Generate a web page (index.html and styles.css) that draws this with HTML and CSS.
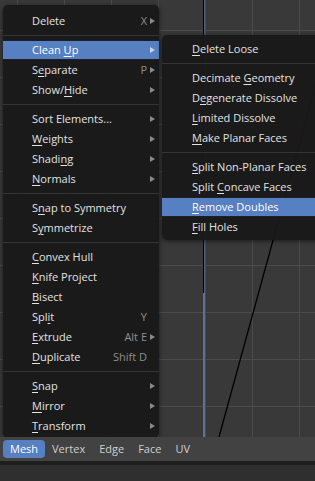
FILE: index.html
```html
<!DOCTYPE html>
<html lang="en">
<head>
    <meta charset="UTF-8">
    <meta name="viewport" content="width=device-width, initial-scale=1.0">
    <title>Mesh menu</title>
    <link rel="stylesheet" href="styles.css">
</head>
<body>
    <div class="screen">
        <div class="viewport">
            <!-- axis lines drawn on the 3d view -->
            <svg class="axes" width="315" height="437" viewBox="0 0 315 437">
                <line x1="203.5" y1="0" x2="203.5" y2="293" stroke="#050608" stroke-width="1"/>
                <line x1="204.5" y1="0" x2="204.5" y2="293" stroke="#4d5e78" stroke-width="1"/>
                <line x1="204" y1="293" x2="204" y2="437" stroke="#5d7392" stroke-width="2"/>
                <line x1="339" y1="0" x2="219" y2="437" stroke="#000" stroke-width="1.3"/>
            </svg>

            <div class="menu mainMenu">
                <div class="item"><span class="label">Delete</span><span class="key">X</span><span class="more arrow"></span></div>
                <div class="sep"></div>
                <div class="item active"><span class="label">Clean <u>U</u>p</span><span class="more arrow"></span></div>
                <div class="item"><span class="label">S<u>e</u>parate</span><span class="key">P</span><span class="more arrow"></span></div>
                <div class="item"><span class="label">Show/<u>H</u>ide</span><span class="more arrow"></span></div>
                <div class="sep"></div>
                <div class="item"><span class="label">Sort Elements...</span><span class="more arrow"></span></div>
                <div class="item"><span class="label"><u>W</u>eights</span><span class="more arrow"></span></div>
                <div class="item"><span class="label">Shadi<u>n</u>g</span><span class="more arrow"></span></div>
                <div class="item"><span class="label"><u>N</u>ormals</span><span class="more arrow"></span></div>
                <div class="sep"></div>
                <div class="item"><span class="label">S<u>n</u>ap to Symmetry</span><span class="more"></span></div>
                <div class="item"><span class="label">S<u>y</u>mmetrize</span><span class="more"></span></div>
                <div class="sep"></div>
                <div class="item"><span class="label"><u>C</u>onvex Hull</span><span class="more"></span></div>
                <div class="item"><span class="label"><u>K</u>nife Project</span><span class="more"></span></div>
                <div class="item"><span class="label"><u>B</u>isect</span><span class="more"></span></div>
                <div class="item"><span class="label">Spl<u>i</u>t</span><span class="key">Y</span><span class="more"></span></div>
                <div class="item"><span class="label"><u>E</u>xtrude</span><span class="key">Alt E</span><span class="more arrow"></span></div>
                <div class="item"><span class="label"><u>D</u>uplicate</span><span class="key">Shift D</span><span class="more"></span></div>
                <div class="sep"></div>
                <div class="item"><span class="label"><u>S</u>nap</span><span class="more arrow"></span></div>
                <div class="item"><span class="label"><u>M</u>irror</span><span class="more arrow"></span></div>
                <div class="item"><span class="label"><u>T</u>ransform</span><span class="more arrow"></span></div>
            </div>

            <div class="menu subMenu">
                <div class="item"><span class="label"><u>D</u>elete Loose</span></div>
                <div class="sep"></div>
                <div class="item"><span class="label">Decimate <u>G</u>eometry</span></div>
                <div class="item"><span class="label">D<u>e</u>generate Dissolve</span></div>
                <div class="item"><span class="label"><u>L</u>imited Dissolve</span></div>
                <div class="item"><span class="label"><u>M</u>ake Planar Faces</span></div>
                <div class="sep"></div>
                <div class="item"><span class="label"><u>S</u>plit Non-Planar Faces</span></div>
                <div class="item"><span class="label">Split <u>C</u>oncave Faces</span></div>
                <div class="item active"><span class="label"><u>R</u>emove Doubles</span></div>
                <div class="item"><span class="label"><u>F</u>ill Holes</span></div>
            </div>
        </div>

        <div class="header">
            <span class="tab selected">Mesh</span>
            <span class="tab">Vertex</span>
            <span class="tab">Edge</span>
            <span class="tab">Face</span>
            <span class="tab">UV</span>
        </div>
        <div class="bottom"></div>
    </div>
</body>
</html>
```

FILE: styles.css
```css
* {
    box-sizing: border-box;
    margin: 0;
    padding: 0;
}

body {
    width: 315px;
    height: 481px;
    overflow: hidden;
    background-color: #2f2f2f;
    font-family: "Open Sans", "DejaVu Sans", sans-serif;
    font-size: 11px;
}

.screen {
    display: flex;
    flex-direction: column;
    height: 481px;
}

.viewport {
    position: relative;
    height: 437px;
    overflow: hidden;
    background-color: #393939;
    background-image:
        linear-gradient(to right, #4b4b4b 1px, transparent 1px),
        linear-gradient(to bottom, #4b4b4b 1px, transparent 1px);
    background-size: 47px 47px;
    background-position: 17px 30px;
}

.axes {
    position: absolute;
    left: 0;
    top: 0;
}

/* popup menus */
.menu {
    position: absolute;
    display: flex;
    flex-direction: column;
    background-color: rgba(24, 24, 24, 0.94);
    border-radius: 5px;
    box-shadow: 0 1px 5px rgba(0, 0, 0, 0.55);
    color: #e2e2e2;
}

.mainMenu {
    left: 3px;
    top: 5px;
    width: 156px;
    padding: 6px 0 2px;
}

.subMenu {
    left: 162px;
    top: 35px;
    width: 175px;
    padding: 4px 0 3px;
    border-radius: 5px 0 0 5px;
}

.item {
    display: flex;
    align-items: center;
    height: 20px;
    line-height: 18px;
    padding-left: 29px;
    white-space: nowrap;
}

.subMenu .item {
    padding-left: 30px;
}

.item.active {
    padding-top: 1px;
    padding-bottom: 1px;
    background-color: #5680c2;
    background-clip: content-box;
    background-origin: border-box;
    color: #fff;
}

.item.active {
    background-clip: padding-box;
    box-shadow: inset 0 1px 0 rgba(24, 24, 24, 0.94), inset 0 -1px 0 rgba(24, 24, 24, 0.94);
}

.label {
    flex: 1;
}

.label u {
    text-underline-offset: 2px;
}

.key {
    color: #8e8e8e;
}

.more {
    display: flex;
    align-items: center;
    width: 12px;
    height: 20px;
    padding-left: 3px;
}

.more.arrow::before {
    content: "";
    border-left: 5px solid #8a8a8a;
    border-top: 3px solid transparent;
    border-bottom: 3px solid transparent;
}

.item.active .more.arrow::before {
    border-left-color: #c6d4ea;
}

.sep {
    height: 9px;
    display: flex;
    align-items: center;
}

.sep::before {
    content: "";
    display: block;
    width: 100%;
    height: 1px;
    background-color: #343434;
}

/* header bar */
.header {
    display: flex;
    align-items: center;
    height: 24px;
    padding-left: 3px;
    background-color: #424242;
    color: #cfcfcf;
}

.tab {
    height: 18px;
    line-height: 18px;
    padding: 0 7px;
    border-radius: 4px;
}

.tab.selected {
    background-color: #5680c2;
    color: #fff;
}

.bottom {
    flex: 1;
    border-top: 4px solid #1e1e1e;
    background-color: #2f2f2f;
}
```
